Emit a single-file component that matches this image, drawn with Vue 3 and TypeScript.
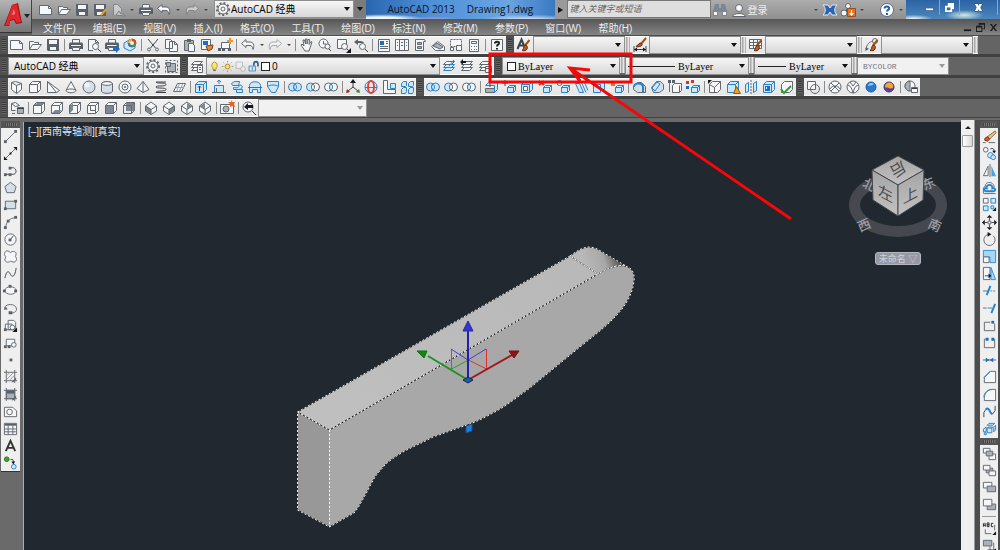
<script setup lang="ts">
import { h, type FunctionalComponent } from 'vue'

type Tool = string

const smallCube = '<path class="bf" d="M6.5 8.5l2-2h6v5l-2 2h-6z"/><path class="b" d="M6.5 8.5h6v5M12.5 8.5l2-2"/>'
const bigCube = '<path class="bf" d="M2.5 5.5l3-3h8v8l-3 3h-8z"/><path class="b" d="M2.5 5.5h8v8M10.5 5.5l3-3"/>'
const wireCube = '<path class="w" d="M2.5 5.5l3-3h8v8l-3 3h-8z"/><path d="M2.5 5.5h8v8M10.5 5.5l3-3"/>'
const openCube = '<path class="w" d="M2.5 5.5l3-3h8v8l-3 3h-8z"/>'
const isoCube = '<path class="w" d="M8 2l5.500 4v5L8 14.500 2.500 11V6z"/>'
const isoEdges = '<path d="M2.500 6L8 9.500 13.500 6M8 9.500v5"/>'
const page = '<path class="w" d="M1.500 12.500v-9h9l3 3v6z"/><path d="M10.500 3.500v3h3"/>'
const folder = '<path class="w" d="M2.500 12.500v-8h4l1 1h4v2M2.500 12.500l3-5h9l-4 5z"/>'
const disk = '<path class="k" d="M2 2h12v12H3l-1-1z"/><path class="wf" d="M4 3h8v4H4zM5 10h6v3H5z"/>'
const printer = '<path class="wf" d="M4 2h8v4H4z"/><path d="M4.500 6V2.500h7V6"/><path class="k" d="M2 5.500h12l1 1V12H1V6.500z"/><path class="wf" d="M3 8h10v1H3zM4 10h8v4H4z"/><path d="M4.500 10.500h7v3h-7z"/>'
const lens = '<circle class="w" cx="9.500" cy="9.500" r="3"/><path class="t" d="M12 12l3 3"/>'
const brush = '<path stroke="#995520" stroke-width="2" d="M13.500 3L9 8.500"/><path fill="#c05a20" stroke="#5a2c15" d="M9 8c2 0 3 2 2 4s-3 2-5 1.500c2-1 1-3 3-5.500z"/>'
const rings = (a: string, b: string, lensFill: string) =>
  `<circle class="${a}" cx="5.500" cy="8" r="4"/><circle class="${b}" cx="10.500" cy="8" r="4"/><path class="${lensFill}" d="M8 5c2 1.500 2 4.500 0 6-2-1.500-2-4.500 0-6z"/>`
const undo = '<path class="w" d="M1.500 6.500l4.500-4v2.500h4c3 0 5 3 3 7.500-.5-3-1.500-4-3-4H6v2z"/>'
const redo = '<path class="w" d="M14.500 6.500L10 2.500v2.500H6c-3 0-5 3-3 7.500.5-3 1.500-4 3-4h4v2z"/>'
const gear = '<circle class="w" cx="8" cy="8" r="5"/><circle cx="8" cy="8" r="2"/><path stroke-dasharray="2 2" stroke-width="2" d="M14 8A6 6 0 1 1 2 8a6 6 0 0 1 12 0"/>'
const layers = '<path class="w" d="M2.500 12.500l3-3h8l-3 3zM2.500 9.500l3-3h8l-3 3zM2.500 6.500l3-3h8l-3 3z"/>'
const nodes = (...pts: number[][]) => pts.map(([x, y]) => `<path class="k" d="M${x - 1} ${y - 1}h3v3h-3z"/>`).join('')

const icons: Record<string, string> = {
  new: page,
  open: folder,
  save: disk,
  saveas: disk + '<path stroke="#e4a02b" stroke-width="2" d="M14.500 7L9 13"/>',
  cloud: '<path class="w" d="M3.500 13.500v-11h4l4 4v3M6 13l3-4 2 3h3l1 2z"/>',
  print: printer,
  preview: '<path class="w" d="M12.500 7V5.500l-3-3h-7v11H7M9.500 2.500v3h3"/>' + lens,
  publish: printer + '<path class="a" d="M9 10h3V8l4 4-4 4v-2H9z"/>',
  print3d: '<path class="bf" d="M2 6l5-3 6 3v5l-5 3-6-3z"/><circle fill="#f2f2f2" stroke="#555" cx="10" cy="6" r="4"/><path stroke="#e73f2a" stroke-width="2" d="M10 3a3 3 0 0 1 3 3"/><path stroke="#37a046" stroke-width="2" d="M13 6a3 3 0 0 1-3 3"/><path stroke="#2c7bd6" stroke-width="2" d="M10 9a3 3 0 0 1-3-3"/><path stroke="#f0b429" stroke-width="2" d="M7 6a3 3 0 0 1 3-3"/>',
  cut: '<path class="t" d="M3 2l7.500 9M13 2L5.500 11"/><circle cx="4" cy="12.500" r="1.500"/><circle cx="12" cy="12.500" r="1.500"/>',
  copyclip: '<path class="w" d="M2.500 2.500h5l2 2v7h-7zM6.500 4.500h5l3 3v7h-8z"/><path d="M11.500 4.500v3h3"/>',
  paste: '<path class="m" d="M3.500 3.500h9v10h-9z"/><path class="k" d="M6 2h4v3H6z"/><path class="w" d="M7.500 6.500h4l2 2v6h-6z"/>',
  match: '<path class="w" d="M2.500 2.500h9v10h-9z"/><path class="a" d="M4 4h5v4H4z"/>' + '<path fill="#e38a34" stroke="#7a3d17" d="M7 9l7-1-1 4-4 2z"/>',
  blockedit: '<path class="w" d="M4.500 5.500h8v6h-8z"/>' + nodes([2, 12], [6, 12], [12, 12]) + '<path stroke="#ef9a1b" stroke-width="2" d="M13 1v6M10 4h6"/>',
  undo,
  redo,
  pan: '<path class="w" d="M6 14l-4-6 1-1 2 2-1-6h1.500l1 4V2h1.500v5l1-4.500h1.500L10 7.500l2-3 1 .5-2 6-1 3z"/>',
  zoomrt: '<circle class="w" cx="6.500" cy="6.500" r="4.500"/><path d="M6.500 4v3H9"/><path d="M10 10l4 4" class="t"/><circle class="w" cx="10.500" cy="9.500" r="2.500"/>',
  zoomwin: '<path class="w" d="M2.500 2.500h9v9h-9z"/>' + lens + '<path class="kk" d="M16 11v5h-5z"/>',
  zoomprev: '<path class="k" d="M1 5l4-3v2c3 0 5 0 6 2H5v2z"/>' + lens,
  props: '<path class="w" d="M2.500 2.500h11v12h-11z"/><path class="a" d="M4 4h4v4H4z"/><path d="M10 4.500h2M10 6.500h2M4 9.500h8M4 11.500h8"/>',
  design: '<path class="w" d="M1.500 2.500h13v11h-13zM5.500 2.500v11M10.500 2.500v11M7 5.500h2M7 8.500h2M12 5.500h1M12 8.500h1M3 5.500h1M3 8.500h1"/>',
  palettes: '<path class="w" d="M3.500 2.500h9l1 2h-2v9h-8z"/><path class="m" d="M5.500 5.500h4v2h-4zM5.500 9.500h4v2h-4z"/>',
  sheet: '<path class="w" d="M1.500 9.500l6-5 7 5v4h-9z"/><path class="m" d="M3 9l4-3 6 4-3 2z"/>',
  markup: '<path class="w" stroke-dasharray="2 1" d="M2.500 2.500h11v7h-11z"/><path class="w" d="M8.500 8.500h5v5h-5zM2.500 10.500h3v3h-3z"/>',
  calc: '<path class="w" d="M3.500 2.500h9v12h-9zM5.500 4.500h5v2h-5zM5 9.500h1M8 9.500h1M10 9.500h1M5 12.500h1M8 12.500h1M10 12.500h1"/>',
  help: '<path class="w" d="M2.500 2.500h11v11h-11z"/><path stroke="#222" stroke-width="2" d="M6 6.500C6 4 10.500 4 10 6.500 9.500 8 8 7 8 9.500M8 11v1.500"/>',
  textstyle: '<path class="t" stroke-width="2" d="M1.500 12L5.500 2.500l4 9.500M3 8.500h5"/>' + brush,
  dimstyle: '<path class="t" d="M2 9v6M14 9v6M2 12.500h12"/><path class="kk" d="M2 12.500l3-2v4zM14 12.500l-3-2v4z"/><path stroke="#995520" stroke-width="2" d="M14 1L9 7"/><path fill="#c05a20" stroke="#5a2c15" d="M8 6c2 0 3 2 1 3s-4 1-5 .5z"/>',
  tablestyle: '<path class="w" d="M1.500 2.500h12v9h-12zM1.500 5.500h12M1.500 8.500h12M5.500 2.500v9M9.500 2.500v9"/>' + brush,
  leaderstyle: '<path d="M2 12C3 7 5 5 9 4"/><circle class="w" cx="11" cy="4" r="2.500"/><path class="k" d="M1 14l1-4 3 2z"/>' + brush,
  gear,
  wsave: '<path class="m" d="M4.500 8.500h3v-3h5v8h-8z"/><path stroke-dasharray="2 2" d="M2.500 2.500h12v12h-12z"/><path class="m" d="M3.500 4.500h4v4h-4z"/>',
  layerprops: layers + '<path class="w" d="M8.500 7.500h5v7h-5zM10 9.500h2M10 11.500h2"/>',
  layercur: '<path class="bf" d="M2.500 12.500l3-3h8l-3 3zM2.500 9.500l3-3h8l-3 3z"/><path class="w" d="M2.500 6.500l3-3h8l-3 3z"/><path class="b" d="M8 8l5-6"/>',
  layerprev: layers + '<path class="kk" d="M1 4l3-3v2h3v2H4v2z"/>',
  layerstate: layers + '<path class="w" d="M8.500 8.500h6v6h-6z"/><path d="M8 10.500h6"/>',
  bulb: '<path fill="#ffe56a" stroke="#a0873a" d="M8 2.500a4 4 0 0 0-2 7v2h4v-2a4 4 0 0 0-2-7z"/><path class="t" d="M6.500 13h3"/>',
  sun: '<circle fill="#ffd95a" stroke="#a38127" cx="8" cy="8" r="3"/><path stroke="#9b8a45" d="M8 1v2M8 13v2M1 8h2M13 8h2M3 3l1 1M12 12l1 1M3 13l1-1M12 4l1-1"/>',
  vpfreeze: '<g opacity=".4"><path class="w" d="M2.500 2.500h8v8h-8z"/><circle class="w" cx="11" cy="11" r="3"/></g>',
  lock: '<path class="bf" d="M2.500 7.500h8v6h-8z"/><path d="M8.500 7V5c0-4 5-4 5 0v3" stroke="#245e94" stroke-width="2"/><path class="k" d="M6 9h1v3H6z"/>',
  polysolid: '<path class="w" d="M2.500 3.500l5 3v8l-5-4zM7.500 6.500l5-2v6l-5 4M2.500 3.500l4-1 6 2"/>',
  box: wireCube,
  wedge: '<path class="w" d="M2.500 2.500v11h9l3-2zM2.500 2.500l9 11"/>',
  cone: '<path class="w" d="M8 2.500l5 9c-1 3-9 3-10 0zM3 11.500c1-2 9-2 10 0"/>',
  sphere: '<circle class="s" cx="8" cy="8" r="6"/><circle class="wf" cx="6" cy="6" r="2.500"/>',
  cylinder: '<path class="s" d="M2.500 4.500v8c2 2.500 9 2.500 11 0v-8c-2-2.500-9-2.500-11 0z"/><path class="w" d="M2.500 4.500c2 2.500 9 2.500 11 0-2-2.500-9-2.500-11 0z"/>',
  torus: '<circle class="w" cx="8" cy="8" r="6"/><circle class="w" cx="8" cy="8" r="3"/><circle class="k" cx="8" cy="8" r="1"/>',
  pyramid: '<path class="w" d="M8 2.500l6 8-6 3-6-4zM8 2.500v11"/>',
  helix: '<path class="t" d="M3 3h10M3 3c0 2 10 0 10 2.500S3 6 3 8s10 0 10 2.500S3 11 3 13.500h10"/>',
  planar: '<path class="w" d="M2.500 12.500l4-8h8l-4 8z"/><path stroke="#9aa0a8" d="M5 8.500h8M8.500 4.500l-3 8M12 4.500l-4 8"/>',
  extrude: bigCube + '<path class="t" d="M6.500 12V7M5 8.500L6.500 7 8 8.500"/>',
  presspull: '<path class="bf" d="M3.500 6.500h9v7h-9z"/><path class="b" d="M8 5V1M6 3l2-2 2 2"/><path d="M1 13.500h14M5.500 9v5"/>',
  sweep: '<path class="bf" d="M2.500 4.500l3-2h5l-1 4h-6zM9.500 6.500c5-2 5 4 0 4h-5v-2c5 1 6-1 5-2zM7.500 10.500h6v3h-6z"/>',
  revolve: '<path class="bf" d="M2.500 6.500c0-5 11-5 11 0v7h-3v-3h-5v3h-3z"/><path d="M1 8.500h14"/>',
  loft: '<path class="bf" d="M2.500 2.500h11v5l-3 6h-4l-4-6z"/><path class="b" d="M2.500 7.500c3-2 8-2 11 0"/>',
  union: rings('bf', 'bf', 'b'),
  subtract: rings('bf', 'w', 'w'),
  intersect: rings('w', 'w', 'bf'),
  move3d: '<path d="M8 8V3M8 8l-5 4M8 8l5 4" class="t"/><path class="kk" d="M8 0l3 4H5z"/><path fill="#a42222" stroke="none" d="M1 14l1-4 3 3z"/><path fill="#2a8a3c" stroke="none" d="M15 14l-1-4-3 3z"/>',
  rotate3d: '<circle stroke="#2d78c8" cx="8" cy="8" r="6"/><ellipse stroke="#d8453f" stroke-width="2" cx="8" cy="8" rx="3" ry="6"/><path stroke="#2a9a42" d="M2 8.500h12"/>',
  align3d: '<path class="w" d="M2.500 1.500h4v9h8v4h-12z"/><path class="bf" d="M9.500 4.500h5v5h-5z"/>',
  array3d: '<path class="bf" d="M2.500 4.500l2-2h3v4l-1 1h-4zM9.500 4.500l2-2h3v4l-1 1h-4zM2.500 10.500l2-2h3v4l-1 2h-4zM9.500 10.500l2-2h3v4l-1 2h-4z"/>',
  faceextrude: '<path class="m" d="M2.500 9.500h9v4h-9z"/><path class="bf" d="M2.500 6.500l3-3h9v7l-3 3v-7z"/><path class="t" d="M7 8V3"/>',
  facemove: smallCube + '<path class="t" d="M4 1v6M1 4h6"/>',
  faceoffset: bigCube + '<path class="w" d="M4.500 7.500h4v4h-4z"/>',
  facedelete: smallCube + '<path stroke="#cf2a20" stroke-width="2" d="M2 2l5 4M7 2L2 6"/>',
  facerotate: smallCube + '<circle class="w" cx="4.500" cy="4" r="2.500"/>',
  facetaper: '<path class="bf" d="M2.500 4.500l4 9h4l-4-9z"/><path class="b" d="M8 2.500l5 11M11 2.500l4 9"/>',
  facecopy: '<path class="bf" d="M2.500 5.500h7v8h-7zM6.500 2.500h7v8h-4"/>',
  facecolor: smallCube + '<path fill="#e8711b" stroke="none" d="M2 3h4v4H2z"/>',
  imprint: '<path class="s" d="M2.500 7.500l4-4h4l4 4v6h-8l-4-3z"/><path class="b" stroke-width="2" d="M3 8c0-4 7-5 9-1v6"/>',
  chamferedge: '<path class="s" d="M2.500 8.500l5-6h4l3 3v5l-4 3h-6z"/><path class="bf" d="M3 9l5-6 3 2-5 7z"/>',
  edgecopy: '<path class="w" d="M5.500 6.500l2-2h7v7l-2 2h-7z"/><path class="b" d="M2.500 4v9"/><path d="M12.500 6.500v7"/>' + nodes([2, 2], [6, 2]),
  edgecolor: smallCube + '<path fill="#c83a21" stroke="none" d="M1 2h3v3H1zM6 1h3v3H6z"/><path class="a" d="M1 7h3v3H1z"/>',
  clean: openCube + '<path d="M2.500 5.500l5 3v5M7.500 8.500l6-6"/><path class="kk" d="M1 1h4L1 5z"/>',
  shell: bigCube + '<path fill="#f0a322" stroke="#8c5a10" d="M11.500 7.500l4 7h-7z"/>',
  separate: '<path class="bf" d="M2.500 5.500l3-2v9l-3 1zM10.500 4.500l3-2v9l-3 2z"/><path stroke-dasharray="2 1" d="M8 1v14"/>',
  inspect: bigCube + '<path class="a" d="M4 7h5v5H4z"/><path class="wf" d="M5 8h1v2H5z"/>',
  check: openCube + '<path stroke="#2d9e34" stroke-width="2" d="M2 10l3 4 7-7"/>',
  wire2d: '<path class="w" d="M2.500 2.500h8v8h-8z"/><circle cx="10" cy="10" r="4.500"/>',
  wire: '<circle class="w" cx="8" cy="8" r="6"/><path d="M4 4l8 8M12 4l-8 8M3 10c2-4 8-4 10 0"/>',
  hidden: '<circle class="w" cx="8" cy="8" r="6"/><path d="M3 6c3 1 4 4 5 8M13 6c-3 1-4 4-5 8M5 3l3 4 3-4"/>',
  realistic: '<circle fill="#2a77cf" stroke="#1b5fb0" cx="8" cy="8" r="5"/><path fill="#9cccf5" stroke="none" d="M5 7c0-3 4-4 6-2-2 2-4 1-6 2z"/>',
  conceptual: '<circle fill="#5d3f9e" stroke="#4a3370" cx="8" cy="8" r="5"/><path fill="#f7a823" stroke="none" d="M4 8c0-5 6-6 8-2 1 4-2 4-4 3s-3 0-4-1z"/>',
  visman: '<circle class="w" cx="7" cy="7" r="5"/><path class="m" d="M7 2v10a5 5 0 0 1 0-10"/><path class="w" d="M8.500 8.500h6v5h-6z"/><path class="t" d="M9 9.500h5"/>',
  views: '<path class="w" d="M2.500 3.500l4-1 4 3-4 1zM2.500 3.500v7h4"/><path class="m" d="M8.500 7.500h6v6h-6z"/><path class="t" d="M8 8.500h7"/><path d="M3 13.500h3"/>',
  top: wireCube + '<path class="d" d="M3 5l3-2h7l-2 2z"/>',
  bottom: wireCube + '<path class="d" d="M3 13l3-3h7l-3 3z"/>',
  left: wireCube + '<path class="d" d="M3 6l3-3v7l-3 3z"/>',
  right: wireCube + '<path class="w" d="M5.500 5.500h5v5h-5z"/>',
  front: wireCube + '<path class="d" d="M3 6h7v7H3z"/>',
  back: '<path class="d" d="M5 3h8v8H5z"/>' + '<path d="M2.500 5.500l3-3h8v8l-3 3h-8zM2.500 5.500h8v8M10.500 5.500l3-3"/>',
  swiso: isoCube + '<path class="d" d="M3 6l5 3v5l-5-3z"/>' + isoEdges,
  seiso: isoCube + '<path class="d" d="M13 6L8 9v5l5-3z"/>' + isoEdges,
  neiso: isoCube + '<path class="d" d="M8 3l5 3-5 3z"/>' + isoEdges,
  nwiso: isoCube + '<path class="d" d="M8 3L3 6l5 3z"/>' + isoEdges,
  camera: '<path class="w" d="M1.500 4.500h13v9h-13z"/><circle class="m" cx="7" cy="9" r="3"/><path fill="#e8641c" stroke="none" d="M12 0l1 2 3 0-1 2 1 3-3-1-2 1 0-3-2-2 3 0z"/>',
  viewprev: '<circle class="w" cx="7" cy="7" r="5"/><path class="kk" d="M3 7l4-4v2h5v3H7v2z"/><path class="t" d="M11 11l4 4"/>',
  line: '<path d="M3 13L13 3"/>' + nodes([2, 13], [13, 2]),
  xline: '<path d="M3 13L13 3"/><path class="kk" d="M1 15v-4l4 4zM15 1v4l-4-4zM7 7h2v2H7z"/>',
  pline: '<path class="t" d="M2 12h6M7 5h3c5 0 5 7 1 7H8" />' + nodes([2, 12], [7, 12], [7, 5]),
  polygon: '<path class="s" d="M8 2.500l6 4.500-2 6.500H4L2 7z"/>',
  rect: '<path class="s" d="M2.500 4.500h11v8h-11z"/>' + nodes([2, 12], [13, 4]),
  arc: '<path d="M3 13C3 8 7 3 13 3"/>' + nodes([2, 13], [5, 6], [13, 2]),
  circle: '<circle class="w" cx="8" cy="8" r="6"/><path class="t" d="M8 8l3-4"/>' + nodes([7, 8]),
  revcloud: '<path class="w" d="M8 4c1-2 6-2 6 1 0 2-1 3-1 3 2 1 2 5-1 6-2 0-3-1-4-1-1 1-5 2-6-1 0-2 1-3 1-4-2-1-2-5 1-6 2 0 3 1 4 2z"/>',
  spline: '<path class="t" d="M2 13C4 4 6 5 8 9s5 2 6-7"/>',
  ellipse: '<ellipse class="w" cx="8" cy="8" rx="6" ry="4"/>' + nodes([1, 8], [13, 8], [7, 3]),
  ellipsearc: '<path d="M2 9C0 3 12 2 14 7s-4 6-6 6"/><path class="k" d="M1 9h4L3 6zM6 11h4v3H6z"/>',
  insert: '<path class="w" d="M5.500 2.500h6l2 2v8h-8zM2.500 6.500h7v6h-7z"/><circle class="w" cx="10" cy="10" r="2.500"/><path class="kk" d="M15 10v5h-5z"/>' + nodes([2, 12]),
  block: '<path class="w" d="M3.500 4.500h9v7h-9z"/><circle class="w" cx="11.500" cy="10.500" r="2.500"/>' + nodes([2, 12], [6, 12]),
  point: '<path class="k" d="M7 7h3v3H7z"/>',
  hatch: '<path d="M3.500 1v14M12.500 1v14M1 3.500h14M1 12.500h14"/><path stroke="#999" d="M4 7l3-3M4 11l7-7M7 12l5-5"/><path class="k" d="M14 9v2l-3 3H9z"/>',
  gradient: '<path class="m" d="M3.500 3.500h9v9h-9z"/><path class="k" d="M4 4h8v3H4z"/><path d="M3.500 1v14M12.500 1v14M1 3.500h14M1 12.500h14"/><path class="k" d="M14 9v2l-3 3H9z"/>',
  region: '<path class="w" d="M1.500 3.500h9l4 4v6h-13z"/><circle cx="7" cy="8.500" r="3"/>',
  table: '<path class="w" d="M1.500 2.500h13v12h-13zM1.500 8.500h13M1.500 11.500h13M5.500 5v9M10.500 5v9"/><path class="k" d="M2 3h12v2H2z"/>',
  mtext: '<path stroke="#333" stroke-width="2" d="M3 14L8 3l5 11M5 10.500h6"/>',
  addsel: '<circle fill="#43a02c" stroke="#2e701c" cx="4" cy="4.500" r="2.500"/><path class="t" d="M8 5c3-1 3 0 3 3"/><path class="kk" d="M9 7h4l-2 3z"/><circle class="bf" cx="11.500" cy="12.500" r="2.500"/>',
  erase: '<path fill="#e8c289" stroke="#8d6a38" d="M14 2L6 8l2 3 7-7z"/><path fill="#e2571e" stroke="#7a2b12" d="M6 8l2 3-2 2-3-1 0-2z"/><path d="M1 14.500h3M7 14.500h7"/>',
  copy: '<circle class="w" cx="4" cy="4" r="2.500"/><circle class="bf" cx="9" cy="10" r="3"/><circle class="bf" cx="12" cy="12" r="2.500"/><path class="t" d="M9 3c3-1 4 0 4 3"/><path class="kk" d="M11 5h4l-2 3z"/>',
  mirror: '<path class="w" d="M6.500 3.500v10h-5z"/><path class="bs" d="M10 3v11h5z"/><path d="M8.500 1v14"/>',
  offset: '<path class="b" stroke-width="2" d="M4 12C1 11 2 8 5 9 4 4 12 4 11 9c4-1 4 3 1 3z"/><path d="M1.500 14.500h13M1.500 14v-4c0-2 1-3 2-3C3 1 13 1 13 8"/>',
  array: '<path class="w" d="M1.500 1.500h5v5h-5z"/><path class="bf" d="M9.500 1.500h5v5h-5zM1.500 9.500h5v5h-5z"/><path class="bf" d="M9.500 9.500h3v3h-3z"/><path class="kk" d="M15 11v4h-4z"/>',
  move: '<path class="kk" d="M8 0l3 3H5zM8 16l3-3H5zM0 8l3-3v6zM16 8l-3-3v6z"/><path class="t" d="M8 3v3M8 10v3M3 8h3M10 8h3"/><path d="M6.500 6.500h3v3h-3z"/>',
  rotate: '<path d="M7 2.500a6 6 0 1 0 5 1.500"/><path class="kk" d="M6 0l4 2.500L6 5z"/>',
  scale: '<path class="bs2" d="M1.500 1.500h13v13h-6v-6h-7z"/><path class="w" d="M1.500 8.500h6v6h-6z"/>',
  stretch: '<path class="w" d="M1.500 1.500h7v13h-7z"/><path class="bs2" d="M9.500 1.500l5 13h-5z"/><path class="t" d="M3 10.500h6"/><path class="kk" d="M7 8l3 2.500L7 13z"/>',
  trim: '<path d="M1 8.500h6"/><path class="b" stroke-dasharray="2 1" d="M9 8.500h6"/><path class="b" stroke-width="2" d="M9 3L5 13"/>',
  extend: '<path d="M1 7.500h4"/><path class="b" d="M6 7.500h5"/><path class="b" stroke-width="2" d="M14 3l-4 10"/>',
  breakpt: '<path d="M9 4.500H2.500v9h11V6"/>' + '<path class="a" d="M10 3h3v3h-3z"/>',
  break: '<path d="M4 4.500H2.500v9h11v-9H12"/><path class="a" d="M4 3h3v3H4zM10 3h3v3h-3z"/>',
  join: '<path d="M1 8.500h14"/><path class="a" d="M4 6l4 2.500L4 11zM12 6L8 8.500l4 2.500z"/>',
  chamfer: '<path class="w" d="M2.500 9v5.500h12v-12H9z"/><path class="b" d="M2 9l7-7"/>',
  fillet: '<path class="w" d="M2.500 12v2.500h12v-12h-3c-5 0-9 4-9 9z"/><path class="b" d="M2 11c0-5 4-8.500 9-8.500"/>',
  blend: '<path class="t" d="M2 14V9l2-3M14 2v5l-3 4"/><path class="b" stroke-width="2" d="M4 6c2-3 4 0 5 3l2 2"/>',
  explode: '<path class="bf" d="M1.500 8.500l3-2v5h-3zM5.500 4.500l2-2h6l-2 2zM5.500 7.500h5v5h-5zM5.500 7.500l1-1h5l-1 1M12.500 6.500l2-2v5l-2 2zM2.500 12.500h2v2h-2z"/>',
  front1: '<path class="w" d="M1.500 2.500h7v5h-7zM7.500 8.500h7v6h-7z"/><path class="m" d="M4.500 5.500h7v5h-7z"/>',
  back1: '<path class="m" d="M4.500 5.500h7v5h-7z"/><path class="w" d="M1.500 2.500h7v5h-7zM7.500 8.500h7v5h-7z"/>',
  above: '<path class="w" d="M1.500 2.500h9v6h-9z"/><path class="m" d="M5.500 6.500h9v6h-9z"/>',
  under: '<path class="m" d="M5.500 7.500h9v6h-9z"/><path class="w" d="M1.500 2.500h9v7h-9z"/>',
  annofront: '<path stroke="#222" d="M1.500 6V3l1-1 1 1v3M1.500 4.500h2M5.500 2v4h2l0-4zM5.500 4h2M12 2.500h-2V6h2"/><path d="M3.500 9v4.500H10M13.500 4v6"/><path class="kk" d="M15 11v4h-4z"/>',
  hatchback: '<path class="m" d="M1.500 2.500h9v6h-9z"/><path d="M6 12.500h9M8.500 9v6M12.500 5v10"/><path class="kk" d="M15 11v4h-4z"/>',
  find: '<path class="d" d="M3 2h4v4h2V2h4l2 7v5h-5v-4H6v4H1V9z"/><path class="wf" d="M2 10h3v3H2zM11 10h3v3h-3z"/>',
  user: '<circle class="w" cx="8" cy="6" r="3.500"/><path class="w" d="M1.500 14.500c1-4 12-4 13 0z"/>',
  exchange: '<path fill="#2b63b5" stroke="#e5edf8" d="M1 3h5l2 3 2-3h5c-3 3-3 7 0 10h-5l-2-3-2 3H1c3-3 3-7 0-10z"/>',
  update: '<circle class="w" cx="8" cy="4" r="2.500"/><circle class="w" cx="4" cy="11" r="3"/><path class="t" d="M6 9l2-3"/><path fill="#e3742b" stroke="#a84a12" d="M7.500 6.500h8v8h-8z"/><path fill="#fff" stroke="none" d="M11 8h1v3h2l-2.500 3L9 11h2z"/>',
  helpblue: '<circle fill="#fff" stroke="#5b6b86" cx="8" cy="8" r="6.500"/><path stroke="#245fae" stroke-width="2" d="M5.500 6.500C5.500 3.500 11 4 10 7 9.500 8 8 8 8 9.500M8 11v2"/>',
}

const Icon: FunctionalComponent<{ name: string }> = (props) =>
  h('svg', { class: 'ico', viewBox: '0 0 16 16', 'aria-hidden': 'true', innerHTML: icons[props.name] })
Icon.props = ['name']

const split = (s: string): Tool[] => s.split(' ')

const quick = split('new open save saveas cloud v print undo v redo v')
const menus = ['文件(F)', '编辑(E)', '视图(V)', '插入(I)', '格式(O)', '工具(T)', '绘图(D)', '标注(N)', '修改(M)', '参数(P)', '窗口(W)', '帮助(H)']
const standard = split('new open save | print preview publish print3d | cut copyclip paste match blockedit | undo v redo v | pan zoomrt zoomwin zoomprev | props design palettes sheet markup calc | help')
const styleKinds = ['textstyle', 'dimstyle', 'tablestyle', 'leaderstyle']
const solids = [
  split('polysolid box wedge cone sphere cylinder torus pyramid helix planar | extrude presspull sweep revolve loft | union subtract intersect | move3d rotate3d align3d array3d'),
  split('union subtract intersect | faceextrude facemove faceoffset facedelete facerotate facetaper facecopy facecolor | imprint chamferedge edgecopy edgecolor | clean shell separate inspect check'),
  split('wire2d | wire hidden realistic conceptual | visman'),
]
const viewTools = split('views | top bottom left right front back | swiso seiso neiso nwiso | camera | viewprev')
const drawGroups = ['line xline pline polygon rect', 'arc circle revcloud spline ellipse', 'ellipsearc insert block point hatch', 'gradient region table mtext addsel'].map(split)
const modifyGroups = ['erase copy mirror offset array', 'move rotate scale stretch trim', 'extend breakpt break join chamfer', 'fillet blend explode'].map(split)
const orderTools = split('front1 back1 above under | annofront hatchback')
const layerState = split('bulb sun vpfreeze lock')

const frontFace = 'M329.500 430L598 274C608 268 616 265 624 266C632 267 635 273 634 281C633 290 629 300 622 309C610 324 596 334 580 347L530 388C516 398 505 407 493 413C484 418 476 422 467 425C455 429 445 433 433 437C422 443 412 447 403 452C395 457 389 461 385 465C380 471 377 474 375 477C371 484 369 488 367 492L358 508L354 513L329.500 527Z'
const topFace = 'M297.500 412L570 256L598 274L329.500 430Z'
const roundFace = 'M570 256C578 250 582 248 588 247C592 247 596 248 599 250L626 266C616 264 608 268 598 274Z'
const sideFace = 'M297.500 412L329.500 430V527L297.500 510Z'
</script>

<template>
  <div class="app">
    <header class="head">
      <button class="logo" aria-label="A">
        <svg viewBox="0 0 32 32" aria-hidden="true">
          <path fill="#8e1216" d="M4 26L12 5l6-2 4 20-6 1-2-4-4 1-1 5z" />
          <path fill="#e2262b" d="M5 26L12 5l5-1 4 18-5 1-1-4-5 1-1 5z" />
          <path fill="#f08a84" d="M12 15l2-6 1 5z" />
          <path fill="#222" d="M24 14h6l-3 4z" />
        </svg>
      </button>
      <div class="head-rows">
        <div class="titlebar">
          <div class="quick">
            <template v-for="(t, i) in quick" :key="i">
              <i v-if="t === 'v'" class="mini" />
              <button v-else class="tool" :class="{ faded: t === 'redo' || t === 'cloud' }" :aria-label="t"><Icon :name="t" /></button>
            </template>
          </div>
          <div class="combo workspace">
            <Icon name="gear" />
            <select class="ui" aria-label="workspace"><option>AutoCAD 经典</option></select><i class="caret" />
          </div>
          <button class="more" aria-label="more"><i class="caret" /></button>
          <div class="glass"><span>AutoCAD 2013</span><span>Drawing1.dwg</span></div>
          <button class="expand" aria-label="expand"><i /></button>
          <input class="search" type="text" placeholder="键入关键字或短语" aria-label="search" />
          <div class="info">
            <button class="tool" aria-label="find"><Icon name="find" /></button>
            <button class="login"><Icon name="user" />登录</button>
            <span class="grow" />
            <i class="mini" />
            <button class="tool" aria-label="exchange"><Icon name="exchange" /></button>
            <button class="tool" aria-label="update"><Icon name="update" /></button>
            <i class="mini" />
            <button class="tool helper" aria-label="help"><Icon name="helpblue" /></button>
            <i class="mini" />
          </div>
          <div class="winctl">
            <button aria-label="minimize"><svg viewBox="0 0 10 10"><path d="M1 6h8v2H1z" /></svg></button>
            <button aria-label="restore"><svg viewBox="0 0 10 10"><path fill-rule="evenodd" d="M3 0h7v7H8v3H0V3h3zM2 5v3h4V5z" /></svg></button>
            <button class="close" aria-label="close"><svg viewBox="0 0 10 10"><path d="M1 1h3l1 2 1-2h3L7 5l2 4H6L5 7 4 9H1l2-4z" /></svg></button>
          </div>
        </div>
        <nav class="menubar">
          <button v-for="m in menus" :key="m">{{ m }}</button>
          <div class="docctl">
            <button aria-label="minimize drawing"><svg viewBox="0 0 10 10"><path d="M1 7h8v2H1z" /></svg></button>
            <button aria-label="restore drawing"><svg viewBox="0 0 10 10"><path fill-rule="evenodd" d="M3 0h7v7H7v3H0V3h3zM1 5v4h5V5zM4 2v1h3v3h2V2z" /></svg></button>
            <button aria-label="close drawing"><svg viewBox="0 0 10 10"><path d="M1 1h2l2 3 2-3h2L6 5l3 4H7L5 6 3 9H1l3-4z" /></svg></button>
          </div>
        </nav>
      </div>
    </header>

    <div class="rows">
      <div class="row">
        <i class="grip" />
        <div class="bar wide">
          <template v-for="(t, i) in standard" :key="i">
            <i v-if="t === '|'" class="sep" />
            <i v-else-if="t === 'v'" class="mini" />
            <button v-else class="tool" :class="{ faded: t === 'redo' }" :aria-label="t"><Icon :name="t" /></button>
          </template>
        </div>
        <i class="grip" />
        <div v-for="s in styleKinds" :key="s" class="bar stylebar">
          <button class="tool" :aria-label="s"><Icon :name="s" /></button>
          <div class="combo"><select :aria-label="s + ' list'"><option></option></select><i class="caret" /></div>
          <i class="ridge" />
        </div>
      </div>

      <div class="row">
        <i class="grip" />
        <div class="combo classic"><select class="ui" aria-label="workspaces"><option>AutoCAD 经典</option></select><i class="caret" /></div>
        <div class="bar">
          <button class="tool" aria-label="gear"><Icon name="gear" /></button>
          <button class="tool" aria-label="save workspace"><Icon name="wsave" /></button>
        </div>
        <i class="grip" />
        <div class="bar"><button class="tool" aria-label="layer properties"><Icon name="layerprops" /></button></div>
        <div class="combo layer">
          <Icon v-for="s in layerState" :key="s" :name="s" />
          <i class="swatch" />
          <select class="ui" aria-label="layer"><option>0</option></select><i class="caret" />
        </div>
        <div class="bar">
          <button v-for="t in ['layercur', 'layerprev', 'layerstate']" :key="t" class="tool" :aria-label="t"><Icon :name="t" /></button>
        </div>
        <i class="grip" />
        <div class="combo color"><i class="swatch" /><select aria-label="color"><option>ByLayer</option></select><i class="caret" /></div>
        <i class="ridge" />
        <div class="combo linetype"><i class="dash long" /><select aria-label="linetype"><option>ByLayer</option></select><i class="caret" /></div>
        <i class="ridge" />
        <div class="combo weight"><i class="dash" /><select aria-label="lineweight"><option>ByLayer</option></select><i class="caret" /></div>
        <i class="ridge" />
        <div class="combo plot"><select class="plotname" aria-label="plot style" disabled><option>BYCOLOR</option></select><i class="caret" /></div>
      </div>

      <div class="row">
        <template v-for="(group, g) in solids" :key="g">
          <i class="grip" />
          <div class="bar">
            <template v-for="(t, i) in group" :key="i">
              <i v-if="t === '|'" class="sep" />
              <button v-else class="tool" :aria-label="t"><Icon :name="t" /></button>
            </template>
          </div>
        </template>
      </div>

      <div class="row">
        <i class="grip" />
        <div class="bar">
          <template v-for="(t, i) in viewTools" :key="i">
            <i v-if="t === '|'" class="sep" />
            <button v-else class="tool" :aria-label="t"><Icon :name="t" /></button>
          </template>
        </div>
        <div class="combo viewlist"><select aria-label="view list" disabled><option></option></select><i class="caret" /></div>
      </div>
    </div>

    <main class="work">
      <aside class="side left">
        <i class="hgrip" />
        <div class="vbar">
          <div v-for="(g, i) in drawGroups" :key="i" class="group">
            <button v-for="t in g" :key="t" class="tool" :aria-label="t"><Icon :name="t" /></button>
          </div>
        </div>
      </aside>

      <section class="view">
        <svg class="scene" viewBox="24 122 937 428" preserveAspectRatio="xMinYMin slice" aria-hidden="true">
          <defs>
            <linearGradient id="gTop" x1="0" y1="1" x2="1" y2="0"><stop offset="0" stop-color="#c0c0c0" /><stop offset="1" stop-color="#b8b8b8" /></linearGradient>
            <linearGradient id="gRound" gradientUnits="userSpaceOnUse" x1="584" y1="265" x2="616" y2="254"><stop offset="0" stop-color="#b9b9b9" /><stop offset=".6" stop-color="#a8a8a8" /><stop offset="1" stop-color="#5c5c5c" /></linearGradient>
            <linearGradient id="gCube" x1="0" y1="0" x2="0" y2="1"><stop offset="0" stop-color="#a5a5a5" /><stop offset="1" stop-color="#c2c2c2" /></linearGradient>
          </defs>
          <path :d="sideFace" fill="#989898" />
          <path :d="topFace" fill="url(#gTop)" />
          <path :d="roundFace" fill="url(#gRound)" />
          <path :d="frontFace" fill="#a8a8a8" />
          <g fill="none">
            <g stroke="#1b1f24"><path :d="sideFace" /><path :d="topFace" /><path :d="roundFace" /><path :d="frontFace" /></g>
            <g stroke="#f4f4f4" stroke-dasharray="2 2"><path :d="sideFace" /><path :d="topFace" /><path :d="roundFace" /><path :d="frontFace" /></g>
          </g>
          <g fill="none">
            <path stroke="#22a022" d="M451.500 349v20l17-9" />
            <path stroke="#4040d0" d="M451 349l17 11 18-11" />
            <path stroke="#e03030" d="M486.500 349v20l-18-9" />
            <path stroke="#18961c" stroke-width="2" d="M468 380l-40-24" />
            <path stroke="#a01820" stroke-width="2" d="M468 380l44-25" />
            <path stroke="#2020a8" stroke-width="2" d="M468 380v-52" />
          </g>
          <path fill="#3434d2" stroke="#2828a0" d="M468 321l5 10h-10z" />
          <path fill="#128a12" stroke="#0e6c0e" d="M417 351l10 0-3 7z" />
          <path fill="#8e1212" stroke="#761010" d="M519 351l-10 0 5 7z" />
          <path fill="#0d5fb8" stroke="#223" d="M468 377l5 3-5 3-5-3z" />
          <path fill="#1480f5" stroke="#2f4a68" d="M466 426l6-2v7l-6 2z" />

          <path fill="#45494f" fill-rule="evenodd" d="M849 205a49 32 0 1 0 98 0a49 32 0 1 0-98 0M860 205a38 21 0 1 0 76 0a38 21 0 1 0-76 0" />
          <g class="compass">
            <text x="857" y="230" transform="rotate(-24 863 224)">西</text>
            <text x="929" y="230" transform="rotate(24 935 224)">南</text>
            <text x="863" y="189" transform="rotate(24 868 184)">北</text>
            <text x="922" y="189" transform="rotate(-24 927 184)">东</text>
          </g>
          <g stroke="#44484c" fill="url(#gCube)">
            <path d="M898 156l26 14-26 15-26-15z" />
            <path d="M872 170l26 15v31l-25-16z" />
            <path d="M924 170l-26 15v31l25-16z" />
          </g>
          <g class="cubetext">
            <text x="890" y="176" transform="rotate(150 898 170)">后</text>
            <text x="0" y="0" transform="translate(878 195) skewY(28)">左</text>
            <text x="0" y="0" transform="translate(903 204) skewY(-28)">上</text>
          </g>
        </svg>
        <p class="caption">[–][西南等轴测][真实]</p>
        <button class="ucs">未命名 ▽</button>
      </section>

      <div class="scroll"><button aria-label="scroll up"><i /></button><span /></div>

      <aside class="side right">
        <i class="hgrip" />
        <div class="vbar">
          <div v-for="(g, i) in modifyGroups" :key="i" class="group">
            <button v-for="t in g" :key="t" class="tool" :aria-label="t"><Icon :name="t" /></button>
          </div>
        </div>
        <i class="hgrip" />
        <div class="vbar">
          <template v-for="(t, i) in orderTools" :key="i">
            <i v-if="t === '|'" class="hsep" />
            <button v-else class="tool" :aria-label="t"><Icon :name="t" /></button>
          </template>
        </div>
      </aside>
    </main>

    <svg class="callout" viewBox="0 0 310 174" aria-hidden="true">
      <path d="M4 8h141v28H4zM305 173L84 22M104 24L84 22l10 13" />
    </svg>
  </div>
</template>

<style>
html, body, #app { height: 100%; }
body { margin: 0; overflow: hidden; background: #5f5f5f; }
.ico { width: 16px; height: 16px; flex: none; display: block; fill: none; stroke: #62686f; }
.ico .w { fill: #f5f7f9; }
.ico .wf { fill: #f2f4f6; stroke: none; }
.ico .k { fill: #5a6068; stroke: none; }
.ico .kk { fill: #15181c; stroke: none; }
.ico .t { stroke: #3c4148; }
.ico .m { fill: #aab0b9; }
.ico .d { fill: #7d8794; stroke: none; }
.ico .s { fill: #d5dfea; }
.ico .b { stroke: #2284cf; }
.ico .bf { fill: #cfe7f8; stroke: #2a83c6; }
.ico .bs { fill: #4aa3e2; stroke: none; }
.ico .bs2 { fill: #a9d6f5; stroke: #2a8fd8; }
.ico .a { fill: #1a6fc4; stroke: none; }
</style>

<style scoped>
.app { position: relative; display: flex; flex-direction: column; height: 100%; overflow: hidden; background: #5f5f5f; font-family: "Liberation Sans", "Noto Sans CJK SC", sans-serif; font-size: 10px; color: #111; }
button { border: 0; padding: 0; margin: 0; background: none; font: inherit; color: inherit; display: flex; align-items: center; justify-content: center; }
select, input { font: inherit; border: 0; margin: 0; padding: 0; min-width: 0; }
.tool { width: 18px; height: 16px; flex: none; }
.faded { opacity: .5; }
.grow { flex: 1; }

.head { display: flex; flex: none; }
.logo { width: 32px; height: 33px; flex: none; margin-bottom: -1px; background: linear-gradient(#b4b4b4, #767676); border-right: 1px solid #444; border-bottom: 1px solid #333; box-sizing: border-box; }
.logo svg { width: 32px; height: 32px; flex: none; }
.head-rows { flex: 1; min-width: 0; }
.titlebar { display: flex; height: 19px; background: linear-gradient(#acacac, #909090); }
.quick { display: flex; align-items: center; padding-left: 5px; width: 177px; box-sizing: border-box; flex: none; }
.mini { flex: none; width: 10px; height: 16px; display: flex; align-items: center; justify-content: center; }
.mini::before { content: ""; border: 2px solid transparent; border-top-color: #444; border-bottom: 0; }
.combo { display: flex; align-items: center; height: 18px; box-sizing: border-box; border: 1px solid #8f8f8f; background: linear-gradient(#f6f6f6, #d8d8d8); flex: none; }
.combo select { flex: 1; height: 16px; appearance: none; background: transparent; font-family: "Liberation Serif", serif; font-size: 10px; color: #000; opacity: 1; outline: none; }
.combo select.ui { font-family: "Open Sans", "Noto Sans CJK SC", sans-serif; }
.combo select.plotname { font-family: "Liberation Mono", monospace; font-size: 8px; color: #777; }
.caret { flex: none; border: 3px solid transparent; border-top: 4px solid #111; border-bottom: 0; margin: 0 3px; }
.workspace { width: 140px; margin-left: 5px; }
.more { width: 12px; height: 18px; background: #7b7b7b; }
.glass { flex: 190 1 0; min-width: 0; display: flex; align-items: center; justify-content: center; gap: 12px; white-space: nowrap; font: 10px/19px "Open Sans", sans-serif; color: #0a1428; background: radial-gradient(ellipse at 8% 100%, #fff 0, #e2f0ff 8%, transparent 18%), radial-gradient(ellipse at 36% 110%, #cfa8d6 0, transparent 16%), radial-gradient(ellipse at 88% 110%, #fff 0, transparent 22%), linear-gradient(90deg, #2a66b0, #4f90d8 35%, #6aa5e2 75%, #3a78c0); }
.expand { width: 12px; height: 19px; background: #9a9a9a; }
.expand i { border: 3px solid transparent; border-left: 5px solid #111; border-right: 0; }
.search { flex: 139 1 0; height: 18px; box-sizing: border-box; padding: 0 2px; border: 1px solid #777; background: #dedede; font-style: italic; font-size: 9px; }
.search::placeholder { color: #666; }
.info { display: flex; align-items: center; flex: 197 1 0; min-width: 0; }
.login { gap: 1px; color: #eee; margin-left: 2px; }
.helper { margin: 0 0 0 11px; }
.winctl { display: flex; flex: none; width: 94px; background: radial-gradient(ellipse at 8% 100%, #fff 0, transparent 16%), radial-gradient(ellipse at 62% 80%, #d5e9df 0, transparent 24%), linear-gradient(#2b63a4, #4c86bb); }
.winctl button { width: 20px; height: 15px; border-right: 1px solid #7fa8d0; }
.winctl button:first-child { margin-left: 14px; }
.winctl .close { width: 38px; }
.winctl svg { width: 9px; height: 9px; fill: #fff; stroke: #33506e; stroke-width: 1; paint-order: stroke; }
.menubar { display: flex; align-items: center; height: 17px; padding-left: 11px; gap: 17px; background: linear-gradient(#565656, #858585); color: #ececec; border-bottom: 1px solid #4c4c4c; box-sizing: border-box; }
.menubar button { white-space: nowrap; }
.docctl { display: flex; gap: 4px; margin-left: auto; padding-right: 2px; }
.docctl svg { width: 9px; height: 9px; fill: #1c1c1c; }

.rows { display: flex; flex-direction: column; gap: 3px; flex: none; background: #414141; padding-bottom: 1px; }
.row { display: flex; height: 18px; background: #646464; }
.grip { flex: none; width: 8px; background: repeating-linear-gradient(#383838 0 1px, #686868 1px 2px) center / 4px 12px no-repeat, #505050; }
.bar { display: flex; align-items: center; flex: none; background: linear-gradient(#f1f1f1, #e6e6e6); border-top: 1px solid #fff; border-bottom: 1px solid #fafafa; box-sizing: border-box; height: 18px; }
.sep { flex: none; width: 4px; height: 12px; background: linear-gradient(#8c8c8c, #8c8c8c) center / 1px 12px no-repeat; }
.wide .sep { width: 5px; }
.wide .mini { width: 9px; }
.stylebar { padding-left: 1px; }
.stylebar .combo { width: 92px; }
.ridge { flex: none; width: 5px; height: 16px; background: linear-gradient(90deg, #fff, #8d8d8d 40%, #fff 60%, #999); }
.classic { width: 136px; padding-left: 5px; }
.layer { width: 234px; padding-left: 1px; }
.layer .ico { width: 13px; height: 13px; }
.swatch { flex: none; width: 7px; height: 7px; border: 1px solid #222; background: #fff; margin: 0 2px 0 1px; }
.color { width: 118px; padding-left: 3px; }
.dash { flex: none; width: 28px; height: 1px; background: #222; margin-right: 3px; }
.dash.long { width: 47px; }
.linetype { width: 124px; padding-left: 2px; }
.weight { width: 98px; padding-left: 3px; }
.plot { width: 92px; padding-left: 5px; background: #f1f1f1; }
.plot .caret, .viewlist .caret { border-top-color: #999; }
.viewlist { width: 109px; background: #f1f1f1; }

.work { flex: 1; min-height: 0; display: flex; padding-top: 2px; background: #6a6a6a; }
.side { flex: none; width: 20px; padding-top: 1px; box-sizing: border-box; overflow: hidden; }
.hgrip { display: block; height: 7px; background: repeating-linear-gradient(90deg, #444 0 1px, #777 1px 2px) center / 12px 3px no-repeat, #555; }
.vbar { display: flex; flex-direction: column; background: #efefef; }
.left { padding-left: 1px; }
.left .vbar { border-bottom: 1px solid #333; }
.right { width: 25px; padding-left: 5px; padding-right: 2px; background: #4d4d4d; }
.group { display: flex; flex-direction: column; }
.group + .group { margin-top: 1px; }
.vbar .tool { height: 17px; }
.vbar .ico { width: 15px; height: 15px; }
.right .hgrip + .vbar { padding-bottom: 1px; }
.hsep { height: 1px; margin: 3px 2px; background: #999; }
.view { position: relative; flex: 1; min-width: 0; margin: 2px 0 0 3px; border-left: 1px solid #a6adb3; background: #212830; overflow: hidden; }
.scene { position: absolute; inset: 0; width: 100%; height: 100%; }
.compass text { font: 500 13px "Noto Sans CJK SC", sans-serif; fill: #9b9ea2; }
.cubetext text { font: 15px "Noto Sans CJK SC", sans-serif; fill: #4a4a4a; }
.caption { position: absolute; left: 4px; top: 3px; margin: 0; line-height: 14px; color: #e6e6e6; white-space: nowrap; }
.ucs { position: absolute; right: 40px; top: 130px; width: 46px; height: 13px; border: 1px solid #b5b7c0; border-radius: 3px; box-sizing: border-box; background: #9699a5; color: #d0d2d8; font-size: 9px; white-space: nowrap; }
.scroll { flex: none; width: 14px; box-sizing: border-box; border-right: 1px solid #999; background: #efefef; }
.scroll button { width: 13px; height: 14px; }
.scroll i { border: 3px solid transparent; border-bottom: 3px solid #222; border-top: 0; }
.scroll span { display: block; width: 9px; height: 10px; margin: 1px; border: 1px solid #999; border-radius: 1px; background: linear-gradient(90deg, #fff, #d8d8d8); }
.callout { position: absolute; left: 486px; top: 46px; width: 310px; height: 174px; pointer-events: none; fill: none; stroke: #f60808; stroke-width: 3px; }
</style>
